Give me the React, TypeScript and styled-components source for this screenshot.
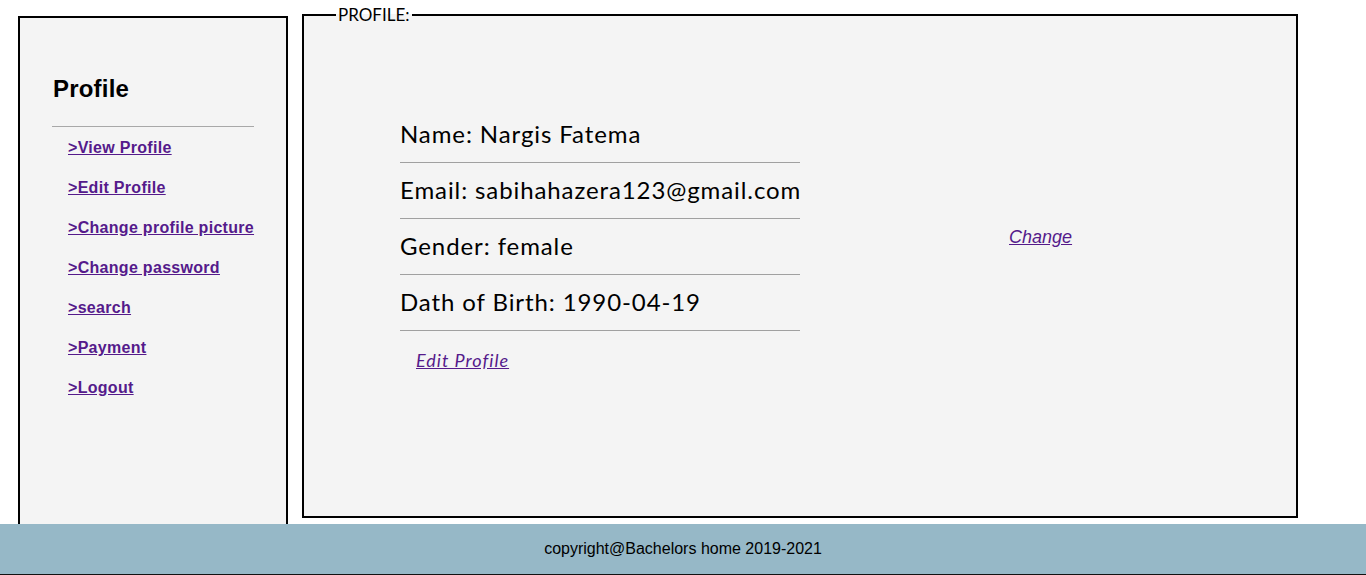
import styled, { createGlobalStyle } from "styled-components";

const GlobalStyle = createGlobalStyle`
  html, body {
    margin: 0;
    padding: 0;
    background: #ffffff;
    overflow: hidden;
  }
`;

const MENU_LINKS = [
  ">View Profile",
  ">Edit Profile",
  ">Change profile picture",
  ">Change password",
  ">search",
  ">Payment",
  ">Logout",
];

const PROFILE_FIELDS = [
  { label: "Name", value: "Nargis Fatema" },
  { label: "Email", value: "sabihahazera123@gmail.com" },
  { label: "Gender", value: "female" },
  { label: "Dath of Birth", value: "1990-04-19" },
];

export default function App() {
  return (
    <>
      <GlobalStyle />
      <Page>
        <Sidebar>
          <SidebarTitle>Profile</SidebarTitle>
          <Divider />
          <Menu>
            {MENU_LINKS.map((label) => (
              <MenuItem key={label}>
                <MenuLink href="#">{label}</MenuLink>
              </MenuItem>
            ))}
          </Menu>
        </Sidebar>

        <ProfileBox>
          <Legend>PROFILE:</Legend>
          <ProfileContent>
            <InfoColumn>
              {PROFILE_FIELDS.map((f) => (
                <InfoRow key={f.label}>
                  {f.label}: {f.value}
                </InfoRow>
              ))}
              <EditLink href="#">Edit Profile</EditLink>
            </InfoColumn>
            <PictureColumn>
              <ChangeLink href="#">Change</ChangeLink>
            </PictureColumn>
          </ProfileContent>
        </ProfileBox>
      </Page>

      <Footer>copyright@Bachelors home 2019-2021</Footer>
    </>
  );
}

const Page = styled.div`
  display: flex;
  align-items: flex-start;
  padding: 6px 0 0 18px;
`;

const Sidebar = styled.aside`
  box-sizing: border-box;
  width: 270px;
  height: 560px;
  margin-top: 10px;
  padding: 0 32px;
  background: #f4f4f4;
  border: 2px solid #000;
`;

const SidebarTitle = styled.h2`
  margin: 57px 0 24px 1px;
  font-family: "Liberation Sans", Arial, sans-serif;
  font-size: 24px;
  font-weight: bold;
  letter-spacing: 0.2px;
  line-height: 27px;
  color: #000;
`;

const Divider = styled.hr`
  margin: 0;
  border: none;
  border-top: 1px solid #a8a8a8;
`;

const Menu = styled.ul`
  list-style: none;
  margin: 0;
  padding: 1px 0 0 16px;
`;

const MenuItem = styled.li`
  height: 40px;
  display: flex;
  align-items: center;
  white-space: nowrap;
`;

const MenuLink = styled.a`
  font-family: "Liberation Sans", Arial, sans-serif;
  font-size: 16px;
  font-weight: bold;
  letter-spacing: 0.3px;
  color: #551a8b;
  text-decoration: underline;
`;

const ProfileBox = styled.fieldset`
  box-sizing: border-box;
  width: 996px;
  height: 512px;
  margin: 0 0 0 14px;
  padding: 0;
  background: #f4f4f4;
  border: 2px solid #000;
`;

const Legend = styled.legend`
  margin-left: 32px;
  padding: 0 2px;
  font-family: Lato, "Liberation Sans", sans-serif;
  font-size: 17px;
  line-height: 18px;
  color: #000;
`;

const ProfileContent = styled.div`
  display: flex;
  align-items: center;
  padding: 83px 0 0 96px;
`;

const InfoColumn = styled.div`
  display: flex;
  flex-direction: column;
  width: 400px;
`;

const InfoRow = styled.div`
  padding: 13px 0 14px;
  line-height: 28px;
  font-family: Lato, "Open Sans", sans-serif;
  font-size: 24px;
  letter-spacing: 0.9px;
  color: #000;
  white-space: nowrap;
  border-bottom: 1px solid #a0a0a0;
`;

const EditLink = styled.a`
  align-self: flex-start;
  margin: 18px 0 0 16px;
  line-height: 22px;
  font-family: Lato, "Open Sans", sans-serif;
  font-size: 18px;
  font-style: italic;
  letter-spacing: 1px;
  color: #551a8b;
  text-decoration: underline;
`;

const PictureColumn = styled.div`
  margin-left: 209px;
  margin-top: -4px;
`;

const ChangeLink = styled.a`
  font-family: "Liberation Sans", Arial, sans-serif;
  font-size: 18px;
  font-style: italic;
  color: #551a8b;
  text-decoration: underline;
`;

const Footer = styled.footer`
  position: fixed;
  left: 0;
  right: 0;
  bottom: 0;
  height: 50px;
  display: flex;
  align-items: center;
  justify-content: center;
  background: #96b8c7;
  border-bottom: 1px solid #111;
  font-family: "Liberation Sans", Arial, sans-serif;
  font-size: 16px;
  color: #000;
`;
